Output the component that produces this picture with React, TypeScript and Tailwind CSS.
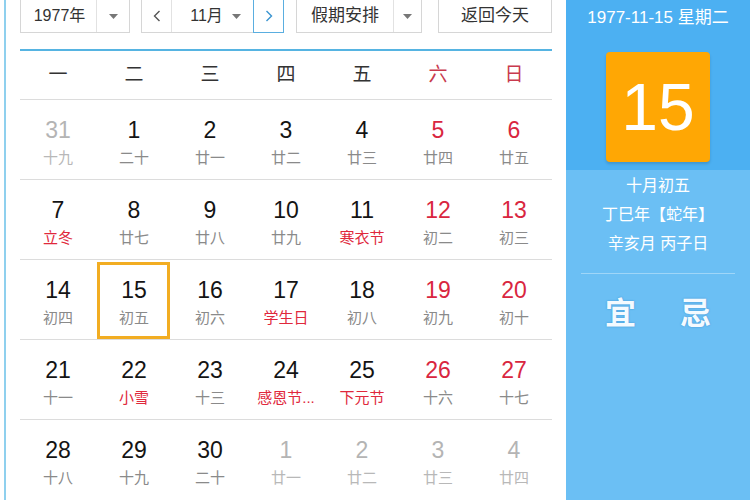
import React from "react"

type Day = {
  d: number
  lunar: string
  other?: boolean
  fest?: boolean
}

const weeks: Day[][] = [
  [
    { d: 31, lunar: "十九", other: true },
    { d: 1, lunar: "二十" },
    { d: 2, lunar: "廿一" },
    { d: 3, lunar: "廿二" },
    { d: 4, lunar: "廿三" },
    { d: 5, lunar: "廿四" },
    { d: 6, lunar: "廿五" },
  ],
  [
    { d: 7, lunar: "立冬", fest: true },
    { d: 8, lunar: "廿七" },
    { d: 9, lunar: "廿八" },
    { d: 10, lunar: "廿九" },
    { d: 11, lunar: "寒衣节", fest: true },
    { d: 12, lunar: "初二" },
    { d: 13, lunar: "初三" },
  ],
  [
    { d: 14, lunar: "初四" },
    { d: 15, lunar: "初五" },
    { d: 16, lunar: "初六" },
    { d: 17, lunar: "学生日", fest: true },
    { d: 18, lunar: "初八" },
    { d: 19, lunar: "初九" },
    { d: 20, lunar: "初十" },
  ],
  [
    { d: 21, lunar: "十一" },
    { d: 22, lunar: "小雪", fest: true },
    { d: 23, lunar: "十三" },
    { d: 24, lunar: "感恩节...", fest: true },
    { d: 25, lunar: "下元节", fest: true },
    { d: 26, lunar: "十六" },
    { d: 27, lunar: "十七" },
  ],
  [
    { d: 28, lunar: "十八" },
    { d: 29, lunar: "十九" },
    { d: 30, lunar: "二十" },
    { d: 1, lunar: "廿一", other: true },
    { d: 2, lunar: "廿二", other: true },
    { d: 3, lunar: "廿三", other: true },
    { d: 4, lunar: "廿四", other: true },
  ],
]

const weekdays = ["一", "二", "三", "四", "五", "六", "日"]

const font = { fontFamily: '"Liberation Sans", Arial, "Noto Sans CJK SC", sans-serif' }

function Caret() {
  return (
    <svg width="9" height="5" viewBox="0 0 9 5">
      <path d="M0 0h9L4.5 5z" fill="#777" />
    </svg>
  )
}

function Cell({ day, col, today }: { day: Day; col: number; today: boolean }) {
  const weekend = col >= 5
  const numColor = day.other ? "text-[#b4b4b4]" : weekend ? "text-[#d9263f]" : "text-[#141414]"
  const lunarColor = day.other
    ? "text-[#b8b8b8]"
    : day.fest
    ? "text-[#e0283c]"
    : "text-[#8a8a8a]"
  return (
    <div className="relative flex flex-col items-center pt-[15px]">
      {today && (
        <div className="absolute left-[1px] right-[2px] top-[2px] bottom-[0px] border-[3px] border-[#f2ad22]" />
      )}
      <div className={`text-[23px] leading-[30px] ${numColor}`}>{day.d}</div>
      <div className={`text-[15px] leading-[26px] ${lunarColor}`}>{day.lunar}</div>
    </div>
  )
}

export default function App() {
  return (
    <div className="flex w-[750px] h-[500px] overflow-hidden bg-white" style={font}>
      {/* left blue rule */}
      <div className="ml-[4px] w-[2px] h-full bg-[#8fd0ee]" />

      {/* calendar */}
      <div className="flex flex-col w-[532px] ml-[14px]">
        <div className="flex items-stretch h-[34px] -mt-[1px] text-[16px] text-[#333]">
          <div className="flex w-[110px] border border-[#d6d6d6] bg-white">
            <div className="flex-1 flex items-center justify-center pl-[2px]">1977年</div>
            <div className="w-[33px] border-l border-[#e2e2e2] flex items-center justify-center">
              <Caret />
            </div>
          </div>
          <div className="flex ml-[11px] w-[143px] border border-[#d6d6d6]">
            <div className="w-[30px] flex items-center justify-center border-r border-[#e2e2e2]">
              <svg width="8" height="12" viewBox="0 0 8 12">
                <path d="M6.5 1L1.5 6l5 5" fill="none" stroke="#555" strokeWidth="1.4" />
              </svg>
            </div>
            <div className="flex-1 flex items-center justify-center gap-[9px] pl-[6px]">
              <span>11月</span>
              <Caret />
            </div>
            <div className="w-[31px] flex items-center justify-center border border-[#5aaee0] -my-[1px] -mr-[1px]">
              <svg width="8" height="12" viewBox="0 0 8 12">
                <path d="M1.5 1l5 5-5 5" fill="none" stroke="#3a94d0" strokeWidth="1.4" />
              </svg>
            </div>
          </div>
          <div className="flex ml-[12px] w-[126px] border border-[#d6d6d6] text-[17px]">
            <div className="flex-1 flex items-center justify-center">假期安排</div>
            <div className="w-[28px] border-l border-[#e2e2e2] flex items-center justify-center">
              <Caret />
            </div>
          </div>
          <div className="flex ml-[16px] w-[114px] border border-[#d6d6d6] items-center justify-center text-[17px]">
            返回今天
          </div>
        </div>

        <div className="mt-[16px] h-[2px] bg-[#56b4e2]" />

        <div className="grid grid-cols-7 h-[49px] items-center border-b border-[#dcdcdc] text-[19px]">
          {weekdays.map((w, i) => (
            <div
              key={w}
              className={`text-center ${i >= 5 ? "text-[#c93a4e]" : "text-[#333]"}`}
            >
              {w}
            </div>
          ))}
        </div>

        {weeks.map((week, r) => (
          <div
            key={r}
            className={`grid grid-cols-7 h-[80px] ${r < 4 ? "border-b border-[#dcdcdc]" : ""}`}
          >
            {week.map((day, c) => (
              <Cell key={c} day={day} col={c} today={r === 2 && c === 1} />
            ))}
          </div>
        ))}
      </div>

      {/* side panel */}
      <div className="ml-[14px] flex-1 flex flex-col text-white">
        <div className="bg-[#4cb0f2] h-[170px] flex flex-col items-center">
          <div className="mt-[7px] text-[17px] leading-[22px]">1977-11-15 星期二</div>
          <div className="mt-[23px] w-[104px] h-[110px] rounded-[4px] bg-[#ffa704] flex items-center justify-center shadow-[0_2px_3px_rgba(0,0,0,0.15)]">
            <span className="text-[66px] leading-none">15</span>
          </div>
        </div>
        <div className="bg-[#6bbff4] flex-1 flex flex-col items-center">
          <div className="mt-[1px] text-[16px] leading-[29px]">十月初五</div>
          <div className="text-[16px] leading-[29px]">丁巳年【蛇年】</div>
          <div className="text-[16px] leading-[29px]">辛亥月 丙子日</div>
          <div className="mt-[15px] w-[154px] h-[1px] bg-[#9fd6f8]" />
          <div className="mt-[22px] flex gap-[44px] text-[31px] leading-[36px] font-bold text-[#f4faff] [text-shadow:0_0_2px_#3a8fd0]">
            <span>宜</span>
            <span>忌</span>
          </div>
        </div>
      </div>
    </div>
  )
}
